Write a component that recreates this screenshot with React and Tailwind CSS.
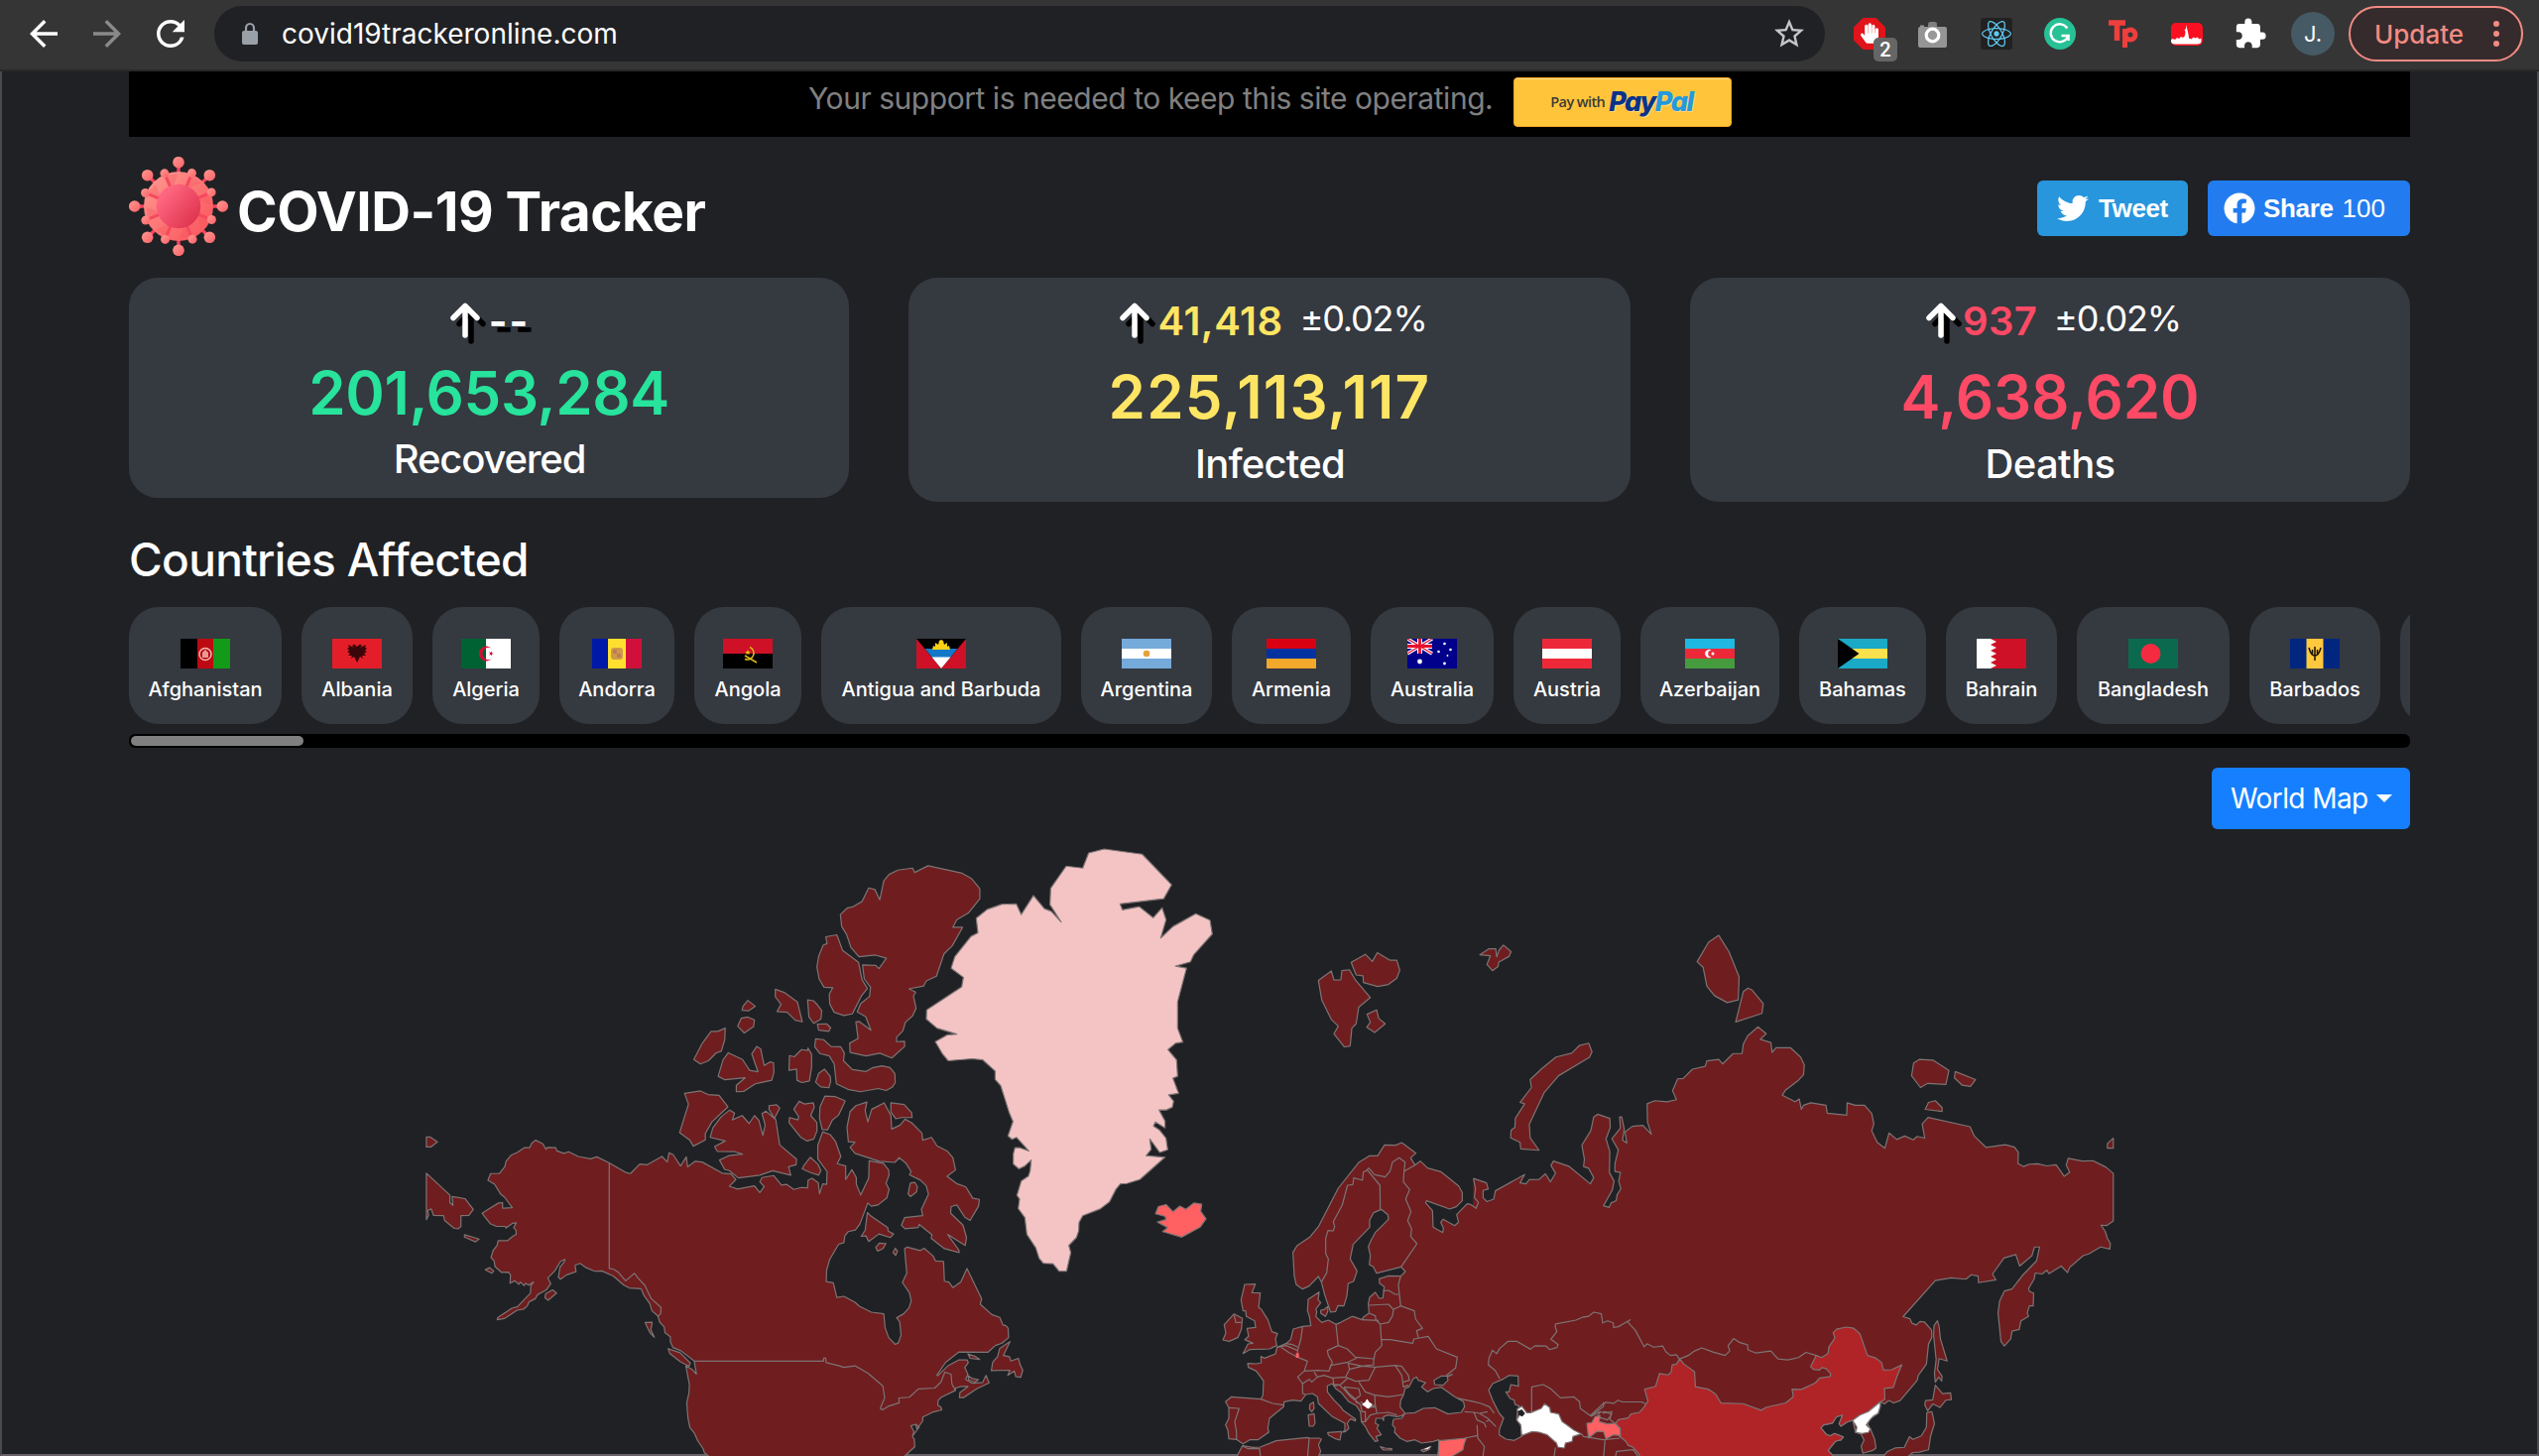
import { MdArrowBack, MdArrowForward, MdRefresh, MdStarBorder, MdExtension } from "react-icons/md";
import { FaReact, FaTwitter, FaFacebook, FaHandPaper } from "react-icons/fa";

/* ---------- Browser toolbar ---------- */

function Toolbar() {
  return (
    <header className="flex h-[72px] w-full shrink-0 items-center border-b-2 border-[#29292a] bg-[#353535] pb-[2px]">
      <MdArrowBack className="ml-[23px] size-[42px] text-white" />
      <MdArrowForward className="ml-[22px] size-[42px] text-[#8a8a8a]" />
      <MdRefresh className="ml-[22px] size-[42px] text-white" />
      <div className="ml-[23px] flex h-[56px] w-[1624px] items-center rounded-full bg-[#202124] pl-[27px]">
        <svg className="h-[24px] w-[18px] overflow-visible" viewBox="0 0 18 24">
          <path d="M5 10V6.500a4 4.500 0 0 1 8 0V10" fill="none" stroke="#9aa0a8" strokeWidth="2.200" />
          <rect x="1" y="9" width="16" height="14" rx="2" fill="#9aa0a8" />
        </svg>
        <span className="ml-[23px] text-[28px] leading-[40px] text-white">covid19trackeronline.com</span>
        <MdStarBorder className="mr-[18px] ml-auto size-[36px] text-[#c4c5c7]" />
      </div>
      <div className="ml-[29px] flex items-center gap-8">
        <div className="relative size-8">
          <svg viewBox="0 0 32 32" className="size-8">
            <path d="M9.500 0h13L32 9.500v13L22.500 32h-13L0 22.500v-13z" fill="#e2131a" />
          </svg>
          <FaHandPaper className="absolute top-[4px] left-[7px] h-[23px] w-[18px] text-white" />
          <span className="absolute top-[20px] left-[20px] flex h-6 w-6 items-center justify-center rounded-[5px] bg-[#666] font-[Roboto] text-[20px] font-medium text-white">2</span>
        </div>
        <svg viewBox="0 0 32 32" className="size-8">
          <path d="M11 9V6.500Q11 4 13.500 4h4Q20 4 20 6.500V9z" fill="#7e7e7e" />
          <path d="M3 9V7.500h4V9h21q2 0 2 2v17q0 2-2 2H3q-2 0-2-2V11q0-2 2-2z" fill="#959595" />
          <circle cx="15.500" cy="17.500" r="6.300" fill="#999" stroke="#fff" strokeWidth="3.200" />
        </svg>
        <span className="flex size-8 items-center justify-center rounded-[3px] bg-[#212121]">
          <FaReact className="size-[30px] text-[#5fc8f0]" />
        </span>
        <svg viewBox="0 0 32 32" className="size-8">
          <circle cx="16" cy="16" r="16" fill="#27c196" />
          <path d="M23.300 10.500A9 9 0 1 0 24.300 18H17.500M20 18h4.600v5" fill="none" stroke="#fff" strokeWidth="2.400" />
        </svg>
        <svg viewBox="0 0 32 32" className="size-8 overflow-visible" fill="none" stroke="#ee3e3e">
          <path d="M1 5h17M9.500 3v20" strokeWidth="5.500" />
          <path d="M17.500 11v19" strokeWidth="5" />
          <circle cx="23" cy="17" r="5" strokeWidth="5" />
        </svg>
        <svg viewBox="0 0 32 32" className="size-8">
          <rect y="5" width="32" height="23" rx="5" fill="#fa1020" />
          <path d="M0 22l2-1 2 1 2-2 2 1 2-2 2 1 2-2 .5-4-1-2 1.500-1 .5-4 .8 4.500 1.200 5 .5 4 2.500 1 2-2 2 1 2-1 2 2 2-1v3q0 3-4 3H4q-4 0-4-3z" fill="#fff" />
        </svg>
        <MdExtension className="size-[34px] -translate-x-px text-white" />
      </div>
      <span className="ml-[23px] flex size-[44px] items-center justify-center rounded-full bg-[#455a64] text-[22px] text-white">J.</span>
      <div className="ml-[14px] flex h-[56px] w-[176px] items-center rounded-full border-[2.500px] border-[#f28b82] bg-[#352a2c] pl-[24px] text-[#f28b82]">
        <span className="text-[26px] font-medium">Update</span>
        <span className="ml-[30px] flex flex-col gap-[4px]">
          <i className="size-[6px] rounded-full bg-[#f28b82]" />
          <i className="size-[6px] rounded-full bg-[#f28b82]" />
          <i className="size-[6px] rounded-full bg-[#f28b82]" />
        </span>
      </div>
    </header>
  );
}

/* ---------- Page header ---------- */

function Virus() {
  const outer = [0, 45, 90, 135, 180, 225, 270, 315];
  const inner = [22, 67, 112, 157, 202, 247, 292, 337];
  return (
    <svg viewBox="-50 -50 100 100" className="size-[100px]">
      <defs>
        <linearGradient id="knob" x1="0" y1="0" x2="1" y2="1">
          <stop offset="0" stopColor="#ff9a90" />
          <stop offset="1" stopColor="#fb6068" />
        </linearGradient>
        <linearGradient id="shell" x1="0" y1="0" x2="1" y2="1">
          <stop offset="0" stopColor="#ff9c93" />
          <stop offset="1" stopColor="#fa5058" />
        </linearGradient>
        <linearGradient id="core" x1="0.2" y1="0.2" x2="0.9" y2="0.8">
          <stop offset="0" stopColor="#ff6680" />
          <stop offset="0.500" stopColor="#ef4d68" />
          <stop offset="1" stopColor="#e03650" />
        </linearGradient>
      </defs>
      {outer.map((a) => (
        <path key={a} d="M0-32V-42" transform={`rotate(${a})`} stroke="#f5435f" strokeWidth="3.500" />
      ))}
      <circle r="35" fill="url(#shell)" />
      {outer.map((a) => (
        <circle key={a} r="5.800" cx={44.3 * Math.sin((a * Math.PI) / 180)} cy={-44.3 * Math.cos((a * Math.PI) / 180)} fill="url(#knob)" />
      ))}
      {inner.map((a) => (
        <g key={a} transform={`rotate(${a})`}>
          <path d="M0-34L12-30L2-20z" fill="#f4525e" opacity="0.300" />
          <path d="M0-20V-33" stroke="#f5485f" strokeWidth="3" />
        </g>
      ))}
      {inner.map((a) => (
        <circle key={a} r="4.500" cx={36 * Math.sin((a * Math.PI) / 180)} cy={-36 * Math.cos((a * Math.PI) / 180)} fill="url(#knob)" />
      ))}
      <circle r="22.300" fill="url(#core)" />
    </svg>
  );
}

function Banner() {
  return (
    <div className="flex h-[66px] items-start bg-black pl-[685px]">
      <p className="mt-[6px] text-[30px] leading-[42px] tracking-[-0.46px] whitespace-nowrap text-[#808080]">
        Your support is needed to keep this site operating.
      </p>
      <button className="mt-[6px] ml-[21px] flex h-[50px] w-[220px] items-center rounded-[4px] border border-[#f5a623] bg-[#ffc43a] pl-[36px] shadow-[inset_0_1px_0_#ffdc8a]">
        <span className="font-['Open_Sans'] text-[14.500px] font-semibold tracking-[-0.6px] text-[#3b3a36]">Pay with</span>
        <span className="ml-[4px] text-[27px] leading-[30px] font-extrabold tracking-[-1.4px] italic [text-shadow:1px_1px_1px_#fff6]">
          <span className="text-[#0a3388]">Pay</span>
          <span className="text-[#2499dc]">Pal</span>
        </span>
      </button>
    </div>
  );
}

function TitleRow() {
  return (
    <div className="mt-[20px] flex h-[100px] items-center">
      <Virus />
      <h1 className="mt-[9px] ml-[9px] text-[55px] leading-[66px] font-bold tracking-[-0.52px] text-white">COVID-19 Tracker</h1>
      <button className="mt-[4px] ml-auto flex h-[56px] w-[152px] items-center rounded-[6px] bg-[#2796dd] pl-[20px] font-['Liberation_Sans'] text-white">
        <FaTwitter className="size-[32px]" />
        <span className="ml-[10px] text-[26px] font-bold tracking-[-0.4px]">Tweet</span>
      </button>
      <button className="mt-[4px] ml-[20px] flex h-[56px] w-[204px] items-center rounded-[6px] bg-[#227cef] pl-[16px] font-['Liberation_Sans'] text-[26px] text-white">
        <FaFacebook className="size-[32px]" />
        <span className="ml-[8px] font-bold tracking-[-0.35px]">Share</span>
        <span className="ml-[9px]">100</span>
      </button>
    </div>
  );
}

/* ---------- Totals ---------- */

function UpArrow() {
  return (
    <svg viewBox="0 0 30 36" className="mb-[2px] h-[36px] w-[30px] overflow-visible" fill="none" strokeWidth="5.500" strokeLinecap="round" strokeLinejoin="round">
      <path d="M9 21.500L21 9.500L33 21.500M21 9.500V39" stroke="#000" />
      <path d="M3 15.500L15 3.500L27 15.500M15 3.500V33" stroke="#fff" />
    </svg>
  );
}

const totals = [
  {
    label: "Recovered",
    total: "201,653,284",
    card: "h-[222px] w-[726px]",
    row: "pl-[2px]",
    delta: "--",
    deltaClass: "ml-[9px] tracking-[2px] font-bold text-white [text-shadow:6px_6px_0_#000]",
    totalClass: "mt-[14px] tracking-[-0.37px] text-[#27e39c]",
    labelClass: "mt-[7px] tracking-[-1.16px] pl-px",
  },
  {
    label: "Infected",
    total: "225,113,117",
    card: "h-[226px] w-[728px]",
    row: "pl-[8px]",
    delta: "41,418",
    deltaClass: "ml-[8px] font-semibold tracking-[0.54px] text-[#ffe564]",
    change: "±0.02%",
    totalClass: "mt-[18px] tracking-[1.2px] text-[#ffe564]",
    labelClass: "mt-[8px] tracking-[-0.77px] pl-px",
  },
  {
    label: "Deaths",
    total: "4,638,620",
    card: "h-[226px] w-[726px]",
    row: "pl-[7px]",
    delta: "937",
    deltaClass: "ml-[7px] font-semibold tracking-[0.3px] text-[#ff4a66]",
    change: "±0.02%",
    totalClass: "mt-[18px] tracking-[-0.1px] text-[#ff4a66]",
    labelClass: "mt-[8px] tracking-[-0.6px]",
  },
];

function Totals() {
  return (
    <section className="mt-[22px] flex h-[226px] items-start justify-between">
      {totals.map((t) => (
        <article key={t.label} className={`flex flex-col items-center rounded-[29px] bg-[#353940] pt-[22px] text-white ${t.card}`}>
          <div className={`flex h-[44px] items-center ${t.row}`}>
            <UpArrow />
            <span className={`text-[40px] leading-[44px] ${t.deltaClass}`}>{t.delta}</span>
            {t.change && <span className="mb-[6px] ml-[17px] text-[36px] leading-[38px] tracking-[-1.2px]">{t.change}</span>}
          </div>
          <div className={`text-[60px] leading-[72px] font-semibold ${t.totalClass}`}>{t.total}</div>
          <div className={`text-[40px] leading-[48px] font-medium ${t.labelClass}`}>{t.label}</div>
        </article>
      ))}
    </section>
  );
}

/* ---------- Countries ---------- */

const flags = {
  af: (
    <>
      <path fill="#000" d="M0 0h17v30H0z" />
      <path fill="#bd0a12" d="M17 0h17v30H17z" />
      <path fill="#129a18" d="M33 0h17v30H33z" />
      <circle cx="25" cy="15.500" r="6" fill="none" stroke="#f0b8b0" strokeWidth="1.500" />
      <path d="M22 19v-5l3-3 3 3v5z" fill="#e89a92" />
    </>
  ),
  al: (
    <>
      <path fill="#e41e28" d="M0 0h50v30H0z" />
      <path d="M25 8l-3-2.500-2 1.500 2 2-6-3 1 3-2 0 2 3-2 1 3 2-2 2 4 0-1 3 3-2 3 6 3-6 3 2-1-3 4 0-2-2 3-2-2-1 2-3-2 0 1-3-6 3 2-2-2-1.500z" fill="#3a060a" />
    </>
  ),
  dz: (
    <>
      <path fill="#006233" d="M0 0h25v30H0z" />
      <path fill="#fff" d="M25 0h25v30H25z" />
      <path d="M31 10a7.500 7.500 0 1 0 0 10a6 6 0 1 1 0-10z" fill="#d21034" />
      <path d="M33 15l-5-1.800 3 4.200v-5l-3 4.200z" fill="#d21034" />
    </>
  ),
  ad: (
    <>
      <path fill="#0018a8" d="M0 0h16v30H0z" />
      <path fill="#fedf2f" d="M16 0h18v30H16z" />
      <path fill="#d0103a" d="M34 0h16v30H34z" />
      <rect x="19" y="9" width="12" height="12" rx="3" fill="#cf9a48" />
      <path d="M21 11h4v4h-4zM25 15h4v4h-4z" fill="#c07a58" />
    </>
  ),
  ao: (
    <>
      <path fill="#ce1126" d="M0 0h50v15H0z" />
      <path fill="#000" d="M0 15h50v15H0z" />
      <path d="M27 8.500a6.500 6.500 0 1 1-5 12M22 17l12 7" fill="none" stroke="#d9b818" strokeWidth="1.500" />
      <path d="M25 11l.8 2h2l-1.600 1.300.6 2-1.800-1.200-1.800 1.200.6-2-1.600-1.300h2z" fill="#e9c816" />
    </>
  ),
  ag: (
    <>
      <path fill="#ce1126" d="M0 0h50v30H0z" />
      <path fill="#000" d="M0 0h50L25 30z" />
      <path fill="#1478c8" d="M8.500 10h33L34 19H16z" />
      <path fill="#fff" d="M15.500 18.500h19L25 30z" />
      <path d="M16 11l1-4 2 1 0-4 3 2 1-4 2-1 2 1 1 4 3-2 0 4 2-1 1 4z" fill="#fcd116" />
    </>
  ),
  ar: (
    <>
      <path fill="#75aadb" d="M0 0h50v30H0z" />
      <path fill="#fff" d="M0 10h50v10H0z" />
      <circle cx="25" cy="15" r="3.300" fill="#e5a13c" />
    </>
  ),
  am: (
    <>
      <path fill="#d90012" d="M0 0h50v10H0z" />
      <path fill="#0033a0" d="M0 10h50v10H0z" />
      <path fill="#f2a82a" d="M0 20h50v10H0z" />
    </>
  ),
  au: (
    <>
      <path fill="#00008b" d="M0 0h50v30H0z" />
      <path d="M0 0l25 15M25 0L0 15" stroke="#fff" strokeWidth="3.500" />
      <path d="M12.500 0v15M0 7.500h25" stroke="#fff" strokeWidth="5" />
      <path d="M12.500 0v15M0 7.500h25" stroke="#e8112d" strokeWidth="2.800" />
      <path d="M0 0l25 15M25 0L0 15" stroke="#e8112d" strokeWidth="1.200" />
      <g fill="#fff">
        <circle cx="12.500" cy="23" r="2.400" />
        <circle cx="37.500" cy="5" r="1.300" />
        <circle cx="31.500" cy="13" r="1.300" />
        <circle cx="43.500" cy="11" r="1.300" />
        <circle cx="40.500" cy="17" r="0.900" />
        <circle cx="37.500" cy="25" r="1.400" />
      </g>
    </>
  ),
  at: (
    <>
      <path fill="#ed2939" d="M0 0h50v30H0z" />
      <path fill="#fff" d="M0 10h50v10H0z" />
    </>
  ),
  az: (
    <>
      <path fill="#1eb8e2" d="M0 0h50v10H0z" />
      <path fill="#ed2939" d="M0 10h50v10H0z" />
      <path fill="#479b3f" d="M0 20h50v10H0z" />
      <path d="M26.500 11.700a4 4 0 1 0 0 6.600a3.300 3.300 0 1 1 0-6.600z" fill="#fff" />
      <circle cx="28" cy="15" r="1.500" fill="#fff" />
    </>
  ),
  bs: (
    <>
      <path fill="#1aa9c6" d="M0 0h50v30H0z" />
      <path fill="#f8e14c" d="M0 10h50v10H0z" />
      <path fill="#000" d="M0 0l21.500 15L0 30z" />
    </>
  ),
  bh: (
    <>
      <path fill="#ce1126" d="M0 0h50v30H0z" />
      <path fill="#fff" d="M0 0h14l6 3-6 3 6 3-6 3 6 3-6 3 6 3-6 3 6 3-6 3H0z" />
    </>
  ),
  bd: (
    <>
      <path fill="#0b6a4e" d="M0 0h50v30H0z" />
      <circle cx="22.500" cy="15" r="10" fill="#f42a41" />
    </>
  ),
  bb: (
    <>
      <path fill="#00267f" d="M0 0h50v30H0z" />
      <path fill="#ffc83d" d="M16.500 0h17v30h-17z" />
      <path d="M25 8v14M19 9q2 8 6 8t6-8M22.500 11v4M27.500 11v4" fill="none" stroke="#1a1200" strokeWidth="1.500" />
    </>
  ),
};

const countries = [
  ["Afghanistan", "af", "w-[154px]"],
  ["Albania", "al", "w-[112px]"],
  ["Algeria", "dz", "w-[108px]"],
  ["Andorra", "ad", "w-[116px]"],
  ["Angola", "ao", "w-[108px]"],
  ["Antigua and Barbuda", "ag", "w-[242px]"],
  ["Argentina", "ar", "w-[132px]"],
  ["Armenia", "am", "w-[120px]"],
  ["Australia", "au", "w-[124px]"],
  ["Austria", "at", "w-[108px]"],
  ["Azerbaijan", "az", "w-[140px]"],
  ["Bahamas", "bs", "w-[128px]"],
  ["Bahrain", "bh", "w-[112px]"],
  ["Bangladesh", "bd", "w-[154px]"],
  ["Barbados", "bb", "w-[132px]"],
  ["", null, "w-[120px]"],
];

function Countries() {
  return (
    <section>
      <h2 className="mt-[30px] text-[46px] leading-[56px] font-medium tracking-[-0.68px] text-white">Countries Affected</h2>
      <div className="mt-[20px] flex h-[118px] gap-5 overflow-hidden">
        {countries.map(([name, code, width]) => (
          <div key={name} className={`flex shrink-0 flex-col items-center rounded-[30px] bg-[#353940] pt-8 ${width}`}>
            {code && (
              <svg viewBox="0 0 50 30" className="h-[30px] w-[50px]">
                {flags[code]}
              </svg>
            )}
            <span className="mt-[7px] text-[20px] leading-[28px] font-medium whitespace-nowrap text-white">{name}</span>
          </div>
        ))}
      </div>
      <div className="mt-[10px] h-[14px] rounded-[6px] bg-black px-[2px] py-[2px]">
        <div className="h-[10px] w-[174px] rounded-[5px] bg-[#808080]" />
      </div>
      <button className="mt-[20px] ml-auto flex h-[62px] w-[200px] items-center rounded-[6px] bg-[#157fff] pl-[19px] text-[28px] tracking-[-0.59px] text-white">
        World Map
        <svg viewBox="0 0 16 8" className="ml-[8px] h-[8px] w-[16px]">
          <path d="M0 0h16L8 8z" fill="#fff" />
        </svg>
      </button>
    </section>
  );
}

/* ---------- World map ---------- */

const northAmerica = [
  "M480 830L452 815 438 820 410 814 388 802 378 806 362 800 359 792 340 791 337 796 330 782 314 773 305 780 300 792 288 792 272 804 258 811 247 826 244 840 232 857 212 857 206 874 221 884 235 909 244 917 261 943 239 944 239 930 230 931 205 948 193 957 211 983 225 990 245 990 247 994 262 982 270 981 264 993 269 999 270 1010 262 1015 250 1026 229 1026 227 1037 218 1050 213 1068 220 1077 222 1091 237 1106 252 1105 257 1112 256 1133 267 1127 276 1136 279 1130 288 1139 291 1133 298 1138 309 1130 303 1139 302 1158 290 1172 273 1192 260 1196 228 1220 227 1225 243 1222 272 1201 287 1198 295 1190 299 1180 313 1172 318 1162 338 1150 348 1134 341 1120 357 1102 370 1078 380 1073 378 1080 369 1092 365 1118 370 1123 384 1112 405 1104 403 1088 414 1083 428 1094 447 1103 463 1102 489 1115 513 1138 525 1145 552 1147 558 1163 572 1185 576 1202 590 1216 594 1231 604 1243 606 1258 618 1268 618 1280 624 1295 642 1303 672 1329 677 1362 667 1350 653 1341 661 1388 660 1409 655 1435 658 1474 662 1496 672 1510 680 1530 692 1550 695 1560 712 1575 1140 1575 1170 1545 1169 1525 1165 1520 1168 1506 1161 1492 1172 1488 1175 1500 1188 1480 1188 1470 1212 1457 1231 1452 1229 1445 1222 1440 1223 1428 1230 1420 1262 1403 1262 1397 1275 1393 1290 1393 1272 1408 1271 1421 1280 1421 1310 1399 1338 1384 1331 1365 1323 1383 1300 1385 1285 1375 1290 1362 1283 1345 1291 1333 1288 1326 1270 1326 1246 1340 1222 1366 1220 1364 1240 1332 1270 1306 1335 1307 1352 1290 1367 1284 1382 1270 1381 1247 1376 1240 1369 1238 1362 1219 1344 1212 1318 1186 1321 1172 1288 1096 1274 1130 1256 1144 1247 1130 1237 1128 1235 1078 1217 1077 1211 1064 1191 1045 1182 1051 1153 1042 1147 1046 1152 1108 1142 1131 1158 1157 1162 1178 1157 1195 1145 1210 1129 1220 1136 1230 1139 1263 1133 1283 1126 1287 1111 1270 1103 1245 1100 1210 1072 1206 1045 1191 1035 1181 1010 1166 994 1169 986 1132 970 1129 971 1100 978 1073 998 1035 1010 1031 1012 1014 1020 1003 1036 999 1046 984 1064 931 1072 939 1087 936 1107 918 1112 897 1105 881 1112 861 1111 848 1099 831 1067 825 1066 868 1048 911 1038 884 1038 867 1028 847 1014 872 1014 838 995 832 1003 814 991 776 979 759 962 752 951 786 951 820 972 852 971 884 962 883 955 908 952 880 938 869 929 874 928 893 914 892 897 897 880 884 869 886 851 862 825 867 820 878 830 890 820 905 808 888 770 896 751 889 766 872 755 858 735 856 690 828 674 826 657 840 654 815 641 838 624 809 615 805 611 828 599 814 565 835 549 833 528 857 519 855z",
  "M1200 82L1277 101 1298 114 1317 140 1317 165 1291 201 1265 218 1256 237 1278 237 1255 283 1236 304 1219 360 1196 372 1190 385 1157 392 1172 400 1167 410 1173 441 1165 460 1149 476 1143 498 1129 514 1129 525 1147 524 1147 537 1118 566 1091 554 1060 561 1024 552 1023 529 1042 517 1037 475 1044 474 1071 496 1059 462 1040 450 1048 429 1068 411 1070 388 1056 367 1052 332 1082 333 1089 341 1106 315 1081 307 1044 311 1026 288 1016 255 1005 235 1002 205 1017 189 1031 185 1051 172 1066 138 1080 142 1091 168 1100 120 1112 104 1132 93 1165 88 1170 99z",
  "M969 261L994 256 1007 295 1043 325 1051 369 1063 391 1050 409 1029 455 1010 459 988 451 978 430 977 405 985 389 965 388 954 367 949 337 953 310 963 282 972 278z",
  "M855 393L875 401 905 425 916 475 900 471 882 451 859 449 868 431 855 412z",
  "M928 420L941 422 950 432 960 447 958 468 942 479 931 463z",
  "M950 481L971 480 980 490 976 499 953 496z",
  "M793 421L810 436 795 447 780 446 782 436z",
  "M793 463L808 470 806 487 785 503 770 486 778 466z",
  "M742 491L741 520 733 549 722 553 704 573 686 581 671 570 689 531 710 499 725 499z",
  "M749 553L781 570 797 597 816 601 802 556 813 537 822 543 830 585 843 576 851 578 852 602 847 622 810 631 784 650 767 651 767 635 787 616 741 621 726 612 737 571z",
  "M887 560L898 563 914 545 928 547 929 541 937 557 937 590 932 624 915 628 904 622 903 594 886 597z",
  "M966 594L979 612 980 625 976 641 958 639 946 627 953 605z",
  "M946 518L964 520 981 537 1003 538 1011 554 1009 573 1029 595 1060 600 1074 591 1096 586 1114 590 1125 605 1126 628 1119 640 1105 648 1088 643 1047 651 1019 645 993 631 988 581 977 561 956 555 944 538z",
  "M650 655L686 649 703 658 728 660 748 689 712 727 697 756 697 772 670 788 662 773 639 754 659 682z",
  "M752 697L763 705 758 722 780 711 796 731 808 711 818 723 827 761 832 735 825 706 834 700 856 721 865 785 903 821 902 835 885 840 890 861 849 850 820 861 772 868 750 849 741 847 729 823 750 812 781 808 764 802 724 801 718 789 742 775 708 766 714 742 732 715z",
  "M841 686L858 684 865 692 853 718 841 696z",
  "M909 675L921 682 941 679 943 690 935 711 949 729 949 750 942 770 927 775 913 766 886 729 887 716 906 722 908 714 897 695z",
  "M967 662L990 663 1013 674 998 710 984 722 973 747 961 746 955 718 956 689z",
  "M1062 677L1058 698 1064 727 1073 695 1101 679 1116 711 1118 745 1137 735 1148 720 1163 729 1186 755 1188 773 1208 766 1220 787 1244 801 1256 817 1262 848 1243 864 1266 883 1285 890 1301 919 1316 922 1314 939 1295 975 1283 967 1265 936 1252 940 1251 957 1279 987 1287 1018 1284 1038 1244 1010 1270 1050 1270 1056 1237 1046 1207 1020 1209 1011 1180 985 1178 993 1148 996 1140 987 1147 968 1188 963 1185 947 1201 909 1196 888 1182 873 1158 860 1162 852 1150 831 1135 817 1125 829 1090 826 1035 806 1024 791 1035 778 1020 777 1017 740 1024 701 1037 686z",
  "M1116 679L1146 683 1163 704 1164 716 1141 716 1127 719 1116 702z",
  "M934 816L951 833 958 849 953 861 933 854 916 845 920 836z",
  "M1160 881L1170 879 1176 890 1174 903 1160 915 1155 908z",
  "M1063 955L1071 964 1109 993 1110 1002 1122 1009 1115 1018 1089 1009 1066 1028 1060 1014 1049 1015 1058 1000z",
  "M1090 1032L1105 1033 1098 1046 1086 1052 1082 1043z",
  "M1126 1045L1131 1052 1127 1063 1121 1056z",
  "M67 765L76 765 92 777 77 790 67 790z",
  "M67 856L120 911 120 930 127 937 125 915 154 920 173 947 163 962 145 963 145 990 139 996 130 995 108 975 106 963 83 962 78 946 70 950 72 962 67 973z",
  "M153 1011L175 1018 186 1022 178 1029 153 1017z",
  "M200 1099L210 1094 219 1102 215 1108z",
  "M336 1160L352 1150 361 1158 342 1176 335 1170z",
  "M561 1232L577 1231 574 1250 582 1269 572 1258z",
  "M613 1298L640 1308 663 1334 660 1342 640 1330 617 1310z",
  "M1385 1280L1370 1315 1384 1318 1387 1329 1404 1322 1408 1338 1414 1352 1409 1370 1398 1368 1395 1354 1380 1365 1385 1352 1343 1353 1346 1332 1357 1318 1362 1297z",
  "M1290 1311L1308 1318 1317 1325 1295 1322z",
  "M1290 1365L1300 1373 1314 1376 1306 1382 1292 1377z",
];
const northAmericaBorders =
  "M480 830V1096L490 1098 500 1105 517 1127 537 1108 545 1120 560 1138 575 1172 597 1194 596 1210 590 1216M672 1329H964V1322H969L970 1333 1000 1341 1010 1345 1035 1341 1065 1360 1098 1392 1102 1422 1092 1448 1097 1452 1110 1443 1135 1434 1134 1422 1158 1420 1178 1399 1215 1397 1229 1382 1238 1357 1252 1362 1254 1387 1262 1403M1172 1488L1180 1495 1165 1518";

const greenland =
  "M640 40L755 53 844 130 820 165 688 178 695 193 746 185 788 213 815 188 827 218 811 264 848 235 917 203 960 219 967 254 911 306 901 324 856 335 889 340 862 425 862 491 878 526 856 529 833 545 859 571 862 612 848 617 865 655 835 659 850 675 846 690 828 697 806 697 824 725 824 742 795 727 789 737 808 748 827 768 832 797 808 804 778 770 782 796 767 812 824 816 748 872 709 882 689 883 676 896 656 928 628 946 575 963 564 980 563 1001 556 1018 533 1038 539 1056 526 1103 504 1103 485 1084 456 1083 443 1070 433 1044 406 1010 400 968 380 945 384 921 376 912 389 876 411 863 416 850 419 823 400 838 382 845 365 833 365 808 370 792 385 792 412 800 375 766 361 771 349 762 364 726 352 702 327 636 310 620 310 599 273 571 241 568 168 573 151 556 129 525 165 508 194 506 134 491 102 468 103 445 209 387 214 363 177 340 188 311 237 260 258 251 253 214 286 192 331 179 374 178 389 205 426 157 459 190 480 197 510 224 476 180 478 139 525 83 575 88 593 50z";
const iceland = "M804 940L827 935 848 953 869 939 887 947 911 931 935 934 932 952 948 971 930 992 875 1017 817 1003 832 993 801 979 826 973 825 965 795 958z";
const svalbard = [
  "M1288 371L1327 347 1335 370 1356 369 1359 346 1382 344 1400 370 1445 414 1410 438 1402 480 1389 491 1384 536 1366 538 1335 505 1348 486 1327 469 1298 420z",
  "M1387 325L1430 305 1451 323 1466 301 1505 320 1525 320 1534 345 1525 365 1500 381 1467 386 1424 376 1423 359 1402 357z",
  "M1435 456L1464 445 1470 466 1490 480 1458 502 1434 489 1445 476z",
];

const eurasiaWest =
  "M857 145L863 175 860 202 872 217 865 235 850 224 838 221 806 254 812 277 800 287 765 268 758 277 766 295 764 308 735 292 733 242 712 218 715 212 785 237 805 230 823 212 823 187 812 167 758 124 718 113 696 92 680 104 667 82 683 68 640 36 622 44 588 43 567 76 543 76 511 95 448 174 388 290 362 322 324 347 311 368 315 440 321 466 340 479 360 470 388 441 397 458 408 500 425 549 440 547 447 529 465 530 474 500 478 462 494 456 505 425 484 388 493 344 543 292 543 270 555 248 578 238 598 254 600 268 560 308 548 330 539 350 545 378 542 405 554 412 564 431 600 422 638 412 651 426 637 440 600 439 572 448 573 462 587 472 583 506 572 507 560 489 543 504 539 523 541 552 525 563 520 572 495 563 490 562 455 580 441 586 418 573 398 580 380 562 383 547 380 540 395 520 387 512 390 488 370 502 357 510 355 545 361 563 365 590 340 592 312 600 304 632 290 644 263 655 258 675 225 688 214 683 215 702 200 705 174 704 176 716 200 727 222 757 220 800 214 812 125 805 107 820 117 838 117 870 107 890 114 905 117 932 140 934 160 947 180 935 205 935 238 912 235 900 240 870 283 835 284 820 310 815 335 818 350 798 370 795 385 805 388 825 430 865 468 885 468 905 462 912 470 910 480 900 475 885 485 872 500 878 500 872 462 845 455 835 435 815 415 790 415 772 430 765 440 780 458 793 480 820 503 832 515 850 518 880 530 895 540 915 560 940 568 938 562 925 578 920 565 900 570 890 560 885 562 870 582 870 585 877 585 865 598 860 625 865 640 862 650 855 640 870 615 873 612 890 620 900 618 912 635 930 655 940 680 935 700 945 735 940 752 935 755 955 748 984 748 992 1000 992";
const westIslands = [
  "M165 465L197 464 187 490 212 491 207 535 215 540 235 572 247 608 264 614 258 630 262 650 240 660 180 662 160 674 175 645 190 643 165 632 177 622 172 598 198 595 195 575 170 562 168 545 160 545 154 512z",
  "M103 587L133 554 158 568 155 600 145 625 118 637 99 633 108 612z",
  "M395 543L405 541 417 532 416 548 409 562 395 552z",
  "M362 828L373 821 375 840 368 850 361 842z",
  "M357 860L375 856 378 885 372 894 360 894z",
  "M416 913L458 910 453 936 440 932 418 920z",
  "M575 956L590 960 610 962 610 966 585 966z",
  "M698 966L712 962 728 955 722 964 706 971z",
  "M138 992L158 953 190 958 212 957 260 938 355 928 362 930 390 930 397 933 388 950 395 970 385 992z",
];
const westBorders =
  "M397 458L413 430 418 388 410 372 410 325 417 302 433 303 437 290 433 275 460 225 476 165 492 163 495 143 521 150 524 125 535 120M540 113L535 118 574 165 575 238M540 113L558 133 590 140 605 122 612 95 632 82 650 95 647 123 680 104M647 123L645 155 664 178 652 207 668 245 658 272 670 297 667 320 686 342 638 412M637 440L630 465 633 497 637 530M583 485L600 483 620 495 633 495M541 528L600 525 615 541 637 530M615 541L612 560 600 580 575 585 562 573 560 560 541 552M520 572L570 574M637 530L678 545 682 570 703 598 685 605 690 625M575 585L578 630 580 650 560 670 555 695M578 632L605 632 673 643 677 630 720 622 745 660 808 685 803 718 775 740M441 586L448 650 415 665 418 680 430 700 420 727M448 650L475 660 500 685 555 690M340 592L335 630 325 665 325 685 355 697 345 727M263 655L290 650 325 665M275 655L300 672 325 685M290 644L310 647 325 655M345 727L385 725 420 727 425 710 478 700 505 687M478 703L520 712 555 708 555 690M470 745L482 722 520 712 560 715 540 755 500 758 470 745M478 703L482 722M345 727L325 745 340 765 360 752 368 760 385 745 375 730M340 765L340 795 350 798M385 745L405 740 430 748 470 745M432 750L435 772 455 768 475 750M430 768H450L465 782 485 805 515 828M465 775L510 780 515 800 500 812 480 795 465 775M510 760L530 790 558 800 560 830 540 835 515 820M560 715L620 710 640 740 645 775 660 770M560 800L600 805 645 798M560 830L565 855 600 852 625 860M500 820L515 828 520 850 530 850 530 880 518 880M530 880L545 860 565 855M532 838L560 835M620 710L640 713 660 740 663 755 645 760M214 812L250 825 283 830M117 838L148 840 140 865 135 880 140 910 140 934M803 808L850 818 880 825 905 835 920 855M830 850L858 852 875 855 900 850M858 852L868 875 890 885 895 898M875 855L900 870 925 895 M895 880L905 875M868 890L870 930 890 955 885 990M830 930L870 922M1183 917L1190 925 1250 935 1300 930M1100 992L1105 958M1250 992L1255 935M1285 992L1290 970 1340 965 1358 990M1320 935L1345 962M133 558L138 580 155 580M158 953L175 962 210 962 213 990M360 930L355 990M1033 853V775L1068 768 1090 780 1120 808 1160 805 1178 820 1180 840 1210 862 1250 825M1212 865L1240 850 1232 865 1262 875 1275 858 1255 850 1240 852";

const eurasiaEast =
  "M13 767L44 780 48 798 36 802 36 823 45 834 61 827 65 803 134 756 123 780 137 783 145 771 168 770 183 754 195 777 207 752 196 730 202 717 238 732 289 783 297 765 285 738 273 733 275 712 269 671 290 630 297 590 306 582 335 594 336 620 326 653 335 690 334 750 345 775 341 800 320 846 333 851 338 838 350 831 352 815 361 797 356 775 360 750 347 747 347 725 355 685 340 653 360 622 358 590 363 590 369 625 365 657 375 665 371 633 388 617 413 614 433 640 424 605 423 552 441 543 470 546 492 540 483 514 495 480 508 479 530 452 560 444 564 428 592 424 601 437 626 407 647 407 650 380 660 356 685 330 704 350 690 366 715 375 718 404 727 390 761 390 785 417 794 440 792 468 780 484 750 512 742 527 772 546 782 538 787 568 792 556 809 549 845 556 848 579 894 585 895 549 914 556 936 556 953 580 958 610 953 630 966 663 984 680 994 636 1012 655 1031 645 1051 656 1060 646 1078 651 1072 610 1086 591 1185 618 1195 645 1223 678 1268 670 1290 677 1299 692 1298 724 1311 733 1325 726 1345 725 1366 731 1388 728 1407 761 1420 750 1412 728 1417 709 1450 717 1475 716 1506 735 1523 753 1523 890 1508 903 1494 902 1504 920 1509 940 1516 955 1515 971 1493 965 1465 985 1452 990 1420 1024 1415 1039 1400 1020 1371 1042 1366 1032 1355 1043 1339 1040 1336 1058 1323 1085 1325 1093 1335 1098 1334 1135 1325 1135 1320 1155 1323 1165 1305 1178 1301 1203 1284 1208 1281 1230 1266 1251 1258 1238 1251 1155 1255 1120 1266 1092 1284 1086 1308 1048 1342 1005 1349 965 1337 965 1331 990 1302 1020 1293 987 1265 997 1238 1043 1246 1060 1205 1068 1204 1049 1188 1045 1175 1058 1140 1054 1103 1062 1027 1166 1043 1172 1048 1185 1058 1190 1067 1180 1077 1181 1094 1204 1095 1225 1087 1245 1082 1303 1063 1335 1060 1350 1020 1408 1005 1415 993 1408 983 1418 973 1412 973 1425 968 1445 950 1460 943 1475 950 1490 960 1520 963 1545 955 1552 932 1560 928 1540 935 1522 928 1505 915 1500 908 1465 895 1470 880 1482 876 1475 884 1450 870 1455 860 1473 840 1478 833 1487 845 1505 855 1510 865 1503 886 1513 880 1522 868 1525 850 1552 862 1568 862 1578 0 1578";
const china =
  "M500 1288L510 1303 535 1325 537 1368 567 1375 585 1390 597 1415 650 1417 692 1436 705 1427 750 1415 768 1397 765 1375 787 1376 820 1357 830 1343 855 1339 856 1330 845 1316 835 1313 830 1320 815 1318 809 1310 822 1278 835 1284 850 1272 852 1253 866 1228 862 1212 870 1202 893 1196 910 1199 925 1215 943 1278 962 1285 976 1298 981 1320 1000 1319 1024 1305 1012 1340 1004 1370 983 1373 984 1405 973 1412 945 1440 908 1465 895 1470 880 1482 876 1475 884 1450 870 1455 860 1473 840 1478 833 1487 845 1505 855 1510 865 1503 886 1513 880 1522 868 1525 850 1552 862 1568 862 1578 405 1578 405 1565 390 1543 378 1537 372 1525 357 1510 360 1490 348 1475 355 1463 378 1458 385 1447 405 1442 415 1428 425 1410 417 1375 443 1367 452 1330 473 1334 480 1325 482 1305 492 1303z";
const northKorea = "M973 1412L973 1425 968 1445 958 1452 950 1462 940 1478 950 1490 945 1500 930 1503 915 1500 918 1485 908 1465 925 1450 945 1440 960 1425z";
const eastBorders =
  "M75 1345L65 1322 48 1305 50 1285 58 1263 68 1273 75 1258 95 1237 115 1237 148 1260 158 1250 185 1251 193 1261 210 1255 213 1247 196 1231 210 1209 206 1195 207 1187 255 1176 270 1168 285 1165 297 1153 315 1158 318 1184 330 1178 343 1184 344 1197 355 1195 383 1175 376 1180 395 1205 416 1253 423 1244 438 1254 460 1251 467 1267 478 1278 492 1276 500 1290M500 1288L520 1278 535 1265 552 1256 578 1268 607 1278 618 1265 614 1250 627 1229 640 1240 660 1247 661 1262 680 1271 715 1265 732 1288 755 1291 780 1284 798 1269 822 1278M320 1420L325 1413 345 1416 354 1407 365 1412 410 1412 420 1418M290 1453L320 1425 320 1412M348 1475L335 1462 340 1440 318 1445";
const eastIslands = [
  "M592 66L616 113 640 185 638 252 612 260 582 240 564 213 555 158 541 142 568 86z",
  "M661 218L670 223 697 263 694 291 632 316 650 228z",
  "M84 94L102 113 97 127 73 143 71 156 58 168 45 150 53 125 28 122 49 105 66 105 68 128 74 108z",
  "M285 377L293 402 287 418 214 471 180 520 145 611 147 650 168 686 125 682 123 663 101 650 102 628 111 620 112 594 134 552 123 548 150 505 147 482 175 450 208 417 245 406 263 384z",
  "M1065 424L1098 426 1135 456 1128 496 1085 493 1068 505 1047 471 1052 434z",
  "M1150 459L1198 482 1186 502 1166 498 1148 477z",
  "M1087 548L1103 543 1119 563 1119 574 1079 568z",
  "M1523 651V680H1509V667z",
  "M1108 1178L1112 1195 1115 1230 1131 1294 1112 1287 1108 1318 1119 1338 1118 1352 1111 1340 1103 1355 1101 1330 1105 1290 1099 1220 1100 1192z",
  "M1103 1364L1120 1388 1139 1386 1141 1405 1128 1407 1114 1428 1097 1418 1085 1438 1078 1420 1080 1408 1097 1406z",
  "M1095 1440L1101 1475 1092 1510 1087 1550 1065 1557 1050 1558 1030 1578 975 1578 990 1555 1008 1545 1030 1543 1042 1512 1050 1520 1070 1510 1082 1485 1083 1443z",
];

function Shapes({ list }) {
  return list.map((d, i) => <path key={i} d={d} vectorEffect="non-scaling-stroke" />);
}

function WorldMap() {
  const line = { fill: "none", vectorEffect: "non-scaling-stroke" };
  return (
    <svg viewBox="130 840 2300 628" className="mt-[4px] block h-[628px] w-[2300px]" fill="#6f1d1f" stroke="#7d7474" strokeWidth="1.200" strokeLinejoin="round">
      <g transform="translate(400 840) scale(0.44643 0.40051)">
        <Shapes list={northAmerica} />
        <path d={northAmericaBorders} {...line} />
      </g>
      <g transform="translate(900 840) scale(0.33333 0.40051)">
        <Shapes list={svalbard} />
        <path d={greenland} fill="#f4c4c4" vectorEffect="non-scaling-stroke" />
        <path d={iceland} fill="#ff6062" vectorEffect="non-scaling-stroke" />
      </g>
      <g transform="translate(1480 920) scale(0.4273 0.34949)">
        <Shapes list={[eurasiaEast, ...eastIslands]} />
      </g>
      <g transform="translate(1200 1140) scale(0.33333)">
        <Shapes list={[eurasiaWest, ...westIslands]} />
        <path d={westBorders} {...line} />
      </g>
      <g transform="translate(1480 920) scale(0.4273 0.34949)">
        <path d={eastBorders} {...line} />
        <path d={china} fill="#b02427" vectorEffect="non-scaling-stroke" />
        <path d={northKorea} fill="#fff" vectorEffect="non-scaling-stroke" />
      </g>
      <g transform="translate(1200 1140) scale(0.33333)">
        <g fill="#202124">
          <path d="M992 742L993 773 970 768 965 790 955 790 968 810 980 815 983 828 995 833 990 850 988 875 1000 890 1003 925 980 937 955 933 935 920 935 905 948 870 935 855 915 815 903 785 915 765 945 752 965 740z" vectorEffect="non-scaling-stroke" />
          <path d="M650 855L635 835 637 815 645 800 650 780 662 775 675 750 685 745 690 755 712 762 700 775 718 790 735 780 760 776 800 805 827 820 830 835 820 852 780 857 740 838 705 840 680 853z" vectorEffect="non-scaling-stroke" />
          <path d="M737 755L760 742 780 742 793 737 778 745 780 755 765 770 740 768z" vectorEffect="non-scaling-stroke" />
        </g>
        <path d="M989 843L1003 833 1018 853 1030 853 1062 840 1072 826 1088 838 1090 852 1115 857 1125 880 1140 890 1160 905 1183 917 1158 925 1155 940 1135 945 1132 960 1112 957 1108 945 1080 920 1055 912 1035 910 1003 922 1000 890 988 875 995 862z" fill="#fff" vectorEffect="non-scaling-stroke" />
        <path d="M991 848L1003 843 1013 855 1005 865 994 860z" fill="#202124" stroke="none" />
        <path d="M1200 885L1215 883 1225 865 1240 862 1237 880 1262 887 1285 885 1300 900 1302 922 1280 920 1258 932 1250 910 1230 910 1205 930z" fill="#ff6062" vectorEffect="non-scaling-stroke" />
        <path d="M752 938L835 930 828 950 825 965 800 980 782 992 750 992z" fill="#ff6062" vectorEffect="non-scaling-stroke" />
        <path d="M320 673h9v14h-9z" fill="#ff6062" stroke="none" />
        <path d="M706 964L728 955 718 964z" fill="#fff" stroke="none" />
        <path d="M535 814L541 823 549 828 539 839 522 828 530 823z" fill="#fff" stroke="#fff" vectorEffect="non-scaling-stroke" />
      </g>
    </svg>
  );
}

export default function App() {
  return (
    <div className="flex h-[1468px] w-[2560px] flex-col overflow-hidden bg-[#202124] font-[Inter,sans-serif]">
      <Toolbar />
      <main className="h-[1396px] border-x-2 border-b-2 border-x-[#4a4a4c] border-b-[#6a6468] px-[128px]">
        <Banner />
        <TitleRow />
        <Totals />
        <Countries />
        <WorldMap />
      </main>
    </div>
  );
}
